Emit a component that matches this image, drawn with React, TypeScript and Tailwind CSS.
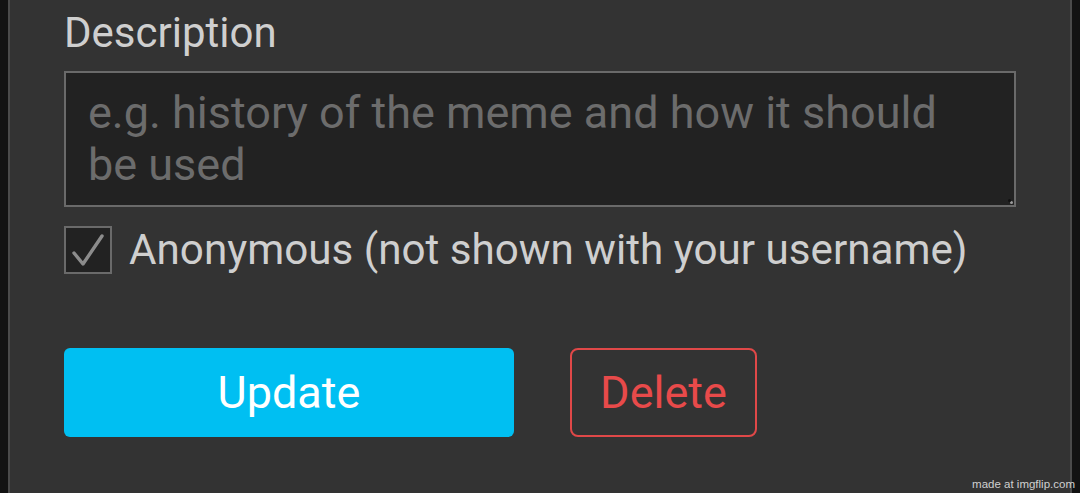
import React from "react";

export default function App() {
  return (
    <div
      className="relative flex h-[493px] w-[1080px] overflow-hidden bg-[#121212]"
      style={{ fontFamily: "Roboto, 'Noto Sans', sans-serif" }}
    >
      <div className="w-[8px] shrink-0" />
      <div className="flex-1 border-x-2 border-[#4a4a4a] bg-[#333333] px-[54px]">
        <div className="mt-[8px] text-[42px] leading-[50px] text-[#cfcfcf]">Description</div>
        <div className="relative mt-[13px]">
          <textarea
            className="block h-[136px] w-full resize-none border-2 border-[#6a6a6a] bg-[#222222] px-[22px] py-[14px] text-[45px] leading-[52px] text-[#cfcfcf] outline-none placeholder:text-[#6c6c6c]"
            placeholder="e.g. history of the meme and how it should be used"
          />
          <div className="absolute bottom-[3px] right-[3px] h-[3px] w-[3px] rounded-full bg-[#9a9a9a]" />
          <div className="absolute bottom-[5px] right-[5px] h-[3px] w-[3px] rounded-full bg-[#111111]" />
        </div>
        <div className="mt-[18px] flex items-center gap-[17px]">
          <div className="flex h-[48px] w-[48px] shrink-0 items-center justify-center border-2 border-[#6a6a6a] bg-[#222222]">
            <svg width="44" height="44" viewBox="0 0 44 44">
              <path
                d="M8 25 L17 36 L36 8"
                fill="none"
                stroke="#8c8c8c"
                strokeWidth="3.4"
                strokeLinecap="round"
                strokeLinejoin="round"
              />
            </svg>
          </div>
          <span className="text-[42.2px] leading-[50px] text-[#cfcfcf]">
            Anonymous (not shown with your username)
          </span>
        </div>
        <div className="mt-[73px] flex gap-[56px]">
          <button className="flex h-[89px] w-[450px] items-center justify-center rounded-[6px] bg-[#00bff2] text-[45px] text-white">
            Update
          </button>
          <button className="flex h-[89px] w-[187px] items-center justify-center rounded-[8px] border-2 border-[#e04848] text-[45px] text-[#e84a4a]">
            Delete
          </button>
        </div>
      </div>
      <div className="w-[8px] shrink-0" />
      <div
        className="absolute bottom-[2px] right-[5px] text-[11.5px] leading-[14px] text-[#d0d0d0]"
        style={{ fontFamily: "'Liberation Sans', Arial, sans-serif" }}
      >
        made at imgflip.com
      </div>
    </div>
  );
}
